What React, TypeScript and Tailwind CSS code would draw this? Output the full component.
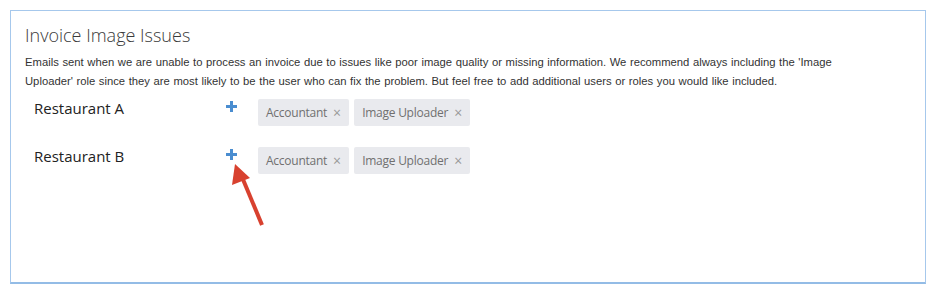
const rows = ['Restaurant A', 'Restaurant B'];
const roles = ['Accountant', 'Image Uploader'];

const Chip = ({ label }: { label: string }) => (
	<div className="flex items-center h-[27px] px-[8px] bg-[#e9eaee] rounded-[2px] text-[12px] text-[#707070] font-['Open_Sans',sans-serif]">
		<span className="tracking-[-0.25px]">{label}</span>
		<span className="ml-[6px] text-[14px] text-[#999] leading-none">×</span>
	</div>
);

export default function App() {
	return (
		<div className="w-[936px] h-[294px] bg-white p-[10px]">
			<div className="relative h-[274px] border border-[#a6c8ec] border-b-2 border-b-[#93bce6] px-[14px] pt-[12px]">
				<h2 className="text-[18px] leading-[24px] text-[#3a3a3a] font-['Open_Sans',sans-serif] font-light">
					Invoice Image Issues
				</h2>
				<p className="mt-[6px] whitespace-nowrap text-[11.25px] leading-[19px] text-[#333] font-['Liberation_Sans',Arial,sans-serif] [word-spacing:0.5px]">
					Emails sent when we are unable to process an invoice due to issues like poor image quality or missing information. We recommend always including the 'Image
					<br />
					Uploader' role since they are most likely to be the user who can fix the problem. But feel free to add additional users or roles you would like included.
				</p>
				<div className="mt-[6px] flex flex-col gap-[21px]">
					{rows.map((name) => (
						<div key={name} className="flex items-start h-[27px]">
							<div className="w-[199px] pl-[9px] pt-[1px] text-[15px] leading-[20px] text-[#222] font-['Open_Sans',sans-serif]">
								{name}
							</div>
							<div className="w-[34px] flex">
								<svg width="11" height="11" viewBox="0 0 11 11" className="mt-[4px] ml-[2px]">
									<rect x="4" y="0" width="3" height="11" fill="#4a8dd0" />
									<rect x="0" y="4" width="11" height="3" fill="#4a8dd0" />
								</svg>
							</div>
							<div className="flex gap-[5px] mt-[2px]">
								{roles.map((r) => (
									<Chip key={r} label={r} />
								))}
							</div>
						</div>
					))}
				</div>
				<svg className="absolute left-[215px] top-[150px]" width="40" height="70" viewBox="0 0 40 70">
					<line x1="36" y1="64" x2="16" y2="16" stroke="#d8412f" strokeWidth="4" />
					<polygon points="9,3 6,24 24,17" fill="#d8412f" />
				</svg>
			</div>
		</div>
	);
}
